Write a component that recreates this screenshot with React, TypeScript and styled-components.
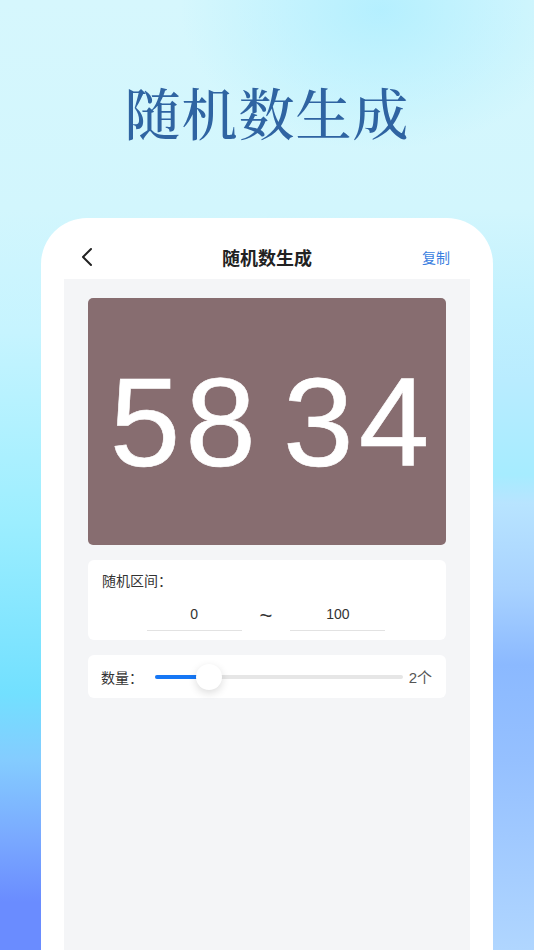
import React, { useState } from "react";
import styled, { createGlobalStyle } from "styled-components";

const GlobalStyle = createGlobalStyle`
  html, body {
    margin: 0;
    padding: 0;
  }
  body {
    font-family: "Noto Sans", "Noto Sans CJK SC", sans-serif;
  }
`;

const Page = styled.div`
  width: 534px;
  height: 950px;
  overflow: hidden;
  display: flex;
  flex-direction: column;
  background-color: #d3f6fd;
  background-image:
    radial-gradient(ellipse 200px 140px at 380px 10px, rgba(175, 238, 255, 0.85), rgba(175, 238, 255, 0) 100%),
    linear-gradient(180deg, #d6f7fd 0%, #d2f6fd 22%, #c2f1fe 32%, #b9ecff 40%, #a6ecff 50%, #b8e4ff 53%, #a8d2ff 62%, #8bb9ff 70%, #95c0ff 80%, #b0d6ff 100%),
    linear-gradient(180deg, #d6f7fd 0%, #d2f6fd 22%, #c6f4ff 35%, #9ceeff 55%, #72e0ff 73%, #84ccff 80%, #7aaaff 88%, #6a8cff 95%, #6a8cff 100%);
  background-repeat: no-repeat;
  background-size: 100% 100%, 50% 100%, 50% 100%;
  background-position: 0 0, right top, left top;
`;

const Hero = styled.div`
  height: 218px;
  flex-shrink: 0;
  display: flex;
  justify-content: center;
  padding-top: 76px;
  box-sizing: border-box;
`;

const HeroTitle = styled.h1`
  margin: 0;
  font-family: "Noto Serif CJK SC", "Noto Sans CJK SC", serif;
  font-size: 56px;
  line-height: 70px;
  font-weight: 500;
  color: #2f64a2;
  letter-spacing: 1px;
`;

const Phone = styled.div`
  flex: 1;
  margin: 0 41px;
  background: #ffffff;
  border-radius: 46px 46px 0 0;
  display: flex;
  flex-direction: column;
  padding: 0 23px;
`;

const NavBar = styled.div`
  height: 61px;
  flex-shrink: 0;
  display: grid;
  grid-template-columns: 60px 1fr 60px;
  align-items: center;
  padding-top: 16px;
  box-sizing: border-box;
`;

const BackButton = styled.button`
  border: none;
  background: none;
  padding: 0 0 0 17px;
  display: flex;
  align-items: center;
  cursor: pointer;
`;

const NavTitle = styled.div`
  text-align: center;
  font-family: "Noto Sans CJK SC", sans-serif;
  font-size: 18px;
  font-weight: 700;
  color: #222222;
`;

const NavAction = styled.button`
  border: none;
  background: none;
  padding: 0 0 0 12px;
  font-family: "Noto Sans CJK SC", sans-serif;
  font-size: 14px;
  color: #3a7ee0;
  text-align: left;
  cursor: pointer;
`;

const Content = styled.div`
  flex: 1;
  background: #f4f5f7;
  padding: 19px 24px 0;
  display: flex;
  flex-direction: column;
  gap: 15px;
`;

const NumberBoard = styled.div<{ $bg: string }>`
  height: 247px;
  border-radius: 5px;
  background: ${(p) => p.$bg};
  display: flex;
  align-items: center;
  justify-content: center;
  gap: 22px;
  padding-left: 10px;
`;

const Digit = styled.span`
  font-family: "Liberation Sans", Arial, sans-serif;
  font-size: 127px;
  line-height: 1;
  color: #ffffff;
  letter-spacing: 5px;
  padding-top: 2px;
  -webkit-text-stroke: 0.6px #ffffff;
`;

const Panel = styled.div`
  background: #ffffff;
  border-radius: 6px;
  padding: 0 14px;
`;

const RangePanel = styled(Panel)`
  height: 80px;
  display: flex;
  flex-direction: column;
  padding-top: 10px;
  box-sizing: border-box;
`;

const Label = styled.div`
  font-family: "Noto Sans CJK SC", sans-serif;
  font-size: 14px;
  color: #333333;
  white-space: nowrap;
`;

const RangeRow = styled.div`
  display: flex;
  justify-content: center;
  align-items: center;
  gap: 14px;
  margin-top: 8px;
  padding-right: 2px;
`;

const RangeInput = styled.input`
  width: 95px;
  height: 32px;
  border: none;
  border-bottom: 1px solid #e2e2e2;
  outline: none;
  text-align: center;
  font-family: "Liberation Sans", Arial, sans-serif;
  font-size: 14px;
  color: #333333;
  background: transparent;
  padding: 0;
`;

const Tilde = styled.span`
  font-family: "Liberation Sans", Arial, sans-serif;
  font-size: 22px;
  color: #333333;
  padding: 2px 4px 0;
`;

const CountPanel = styled(Panel)`
  height: 43px;
  display: flex;
  align-items: center;
  gap: 12px;
  padding-left: 13px;
`;

const SliderTrack = styled.div`
  flex: 1;
  height: 4px;
  border-radius: 2px;
  background: #e6e6e6;
  position: relative;
`;

const SliderFill = styled.div`
  position: absolute;
  left: 0;
  top: 0;
  bottom: 0;
  border-radius: 2px;
  background: #1677f5;
`;

const SliderThumb = styled.div`
  position: absolute;
  top: 50%;
  width: 26px;
  height: 26px;
  margin-left: -13px;
  margin-top: -13px;
  border-radius: 50%;
  background: #ffffff;
  box-shadow: 0 3px 8px rgba(0, 0, 0, 0.14);
`;

const CountValue = styled.span`
  font-family: "Liberation Sans", "Noto Sans CJK SC", sans-serif;
  font-size: 15px;
  color: #555555;
  margin-left: -6px;
`;

const App: React.FC = () => {
  const [min, setMin] = useState("0");
  const [max, setMax] = useState("100");
  const numbers = [58, 34];
  const count = 2;
  const percent = 22;

  return (
    <>
      <GlobalStyle />
      <Page>
        <Hero>
          <HeroTitle>随机数生成</HeroTitle>
        </Hero>
        <Phone>
          <NavBar>
            <BackButton aria-label="back">
              <svg width="12" height="20" viewBox="0 0 12 20">
                <path d="M10 2 L2 10 L10 18" fill="none" stroke="#222" strokeWidth="2" strokeLinecap="round" strokeLinejoin="round" />
              </svg>
            </BackButton>
            <NavTitle>随机数生成</NavTitle>
            <NavAction>复制</NavAction>
          </NavBar>
          <Content>
            <NumberBoard $bg="#876d70">
              {numbers.map((n) => (
                <Digit key={n}>{n}</Digit>
              ))}
            </NumberBoard>
            <RangePanel>
              <Label>随机区间：</Label>
              <RangeRow>
                <RangeInput value={min} onChange={(e) => setMin(e.target.value)} />
                <Tilde>~</Tilde>
                <RangeInput value={max} onChange={(e) => setMax(e.target.value)} />
              </RangeRow>
            </RangePanel>
            <CountPanel>
              <Label>数量：</Label>
              <SliderTrack>
                <SliderFill style={{ width: `${percent}%` }} />
                <SliderThumb style={{ left: `${percent}%` }} />
              </SliderTrack>
              <CountValue>{count}个</CountValue>
            </CountPanel>
          </Content>
        </Phone>
      </Page>
    </>
  );
};

export default App;
